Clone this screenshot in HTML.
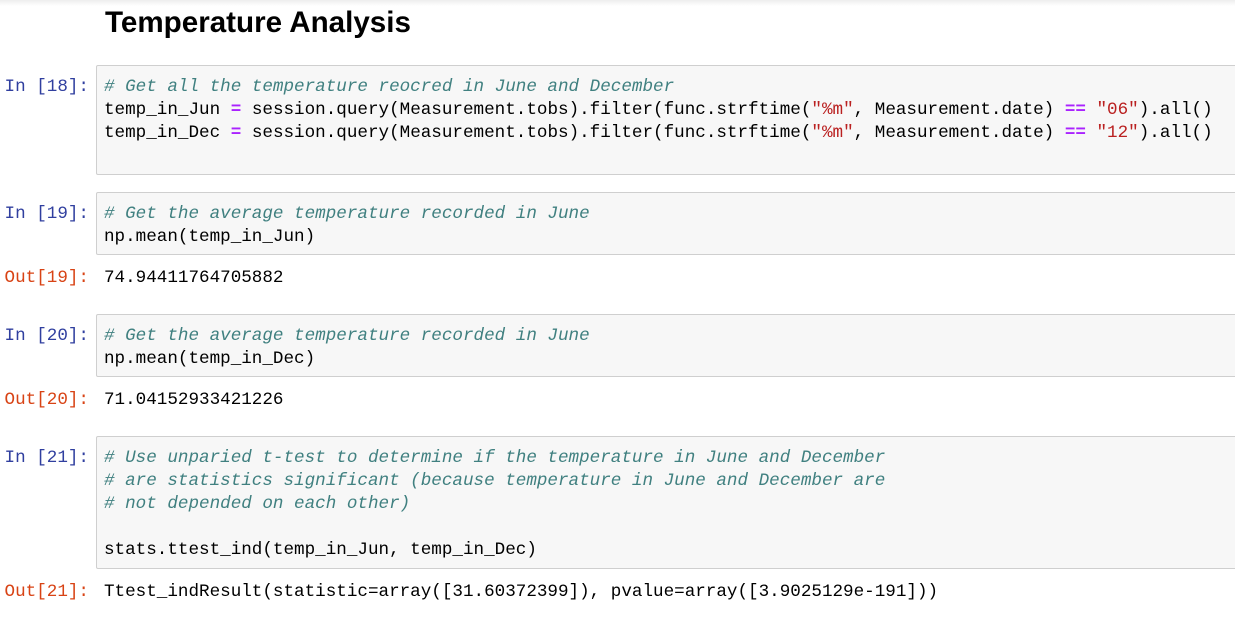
<html><head><style>
body{margin:0;width:1235px;height:619px;background:#fff;position:relative;overflow:hidden;font-family:"Liberation Mono",monospace;}
.t{position:absolute;left:105px;top:6px;font:bold 29.6px "Liberation Sans",sans-serif;color:#000;}
.box{position:absolute;left:96px;width:1145px;background:#f7f7f7;border:1px solid #cfcfcf;border-radius:2px;box-sizing:border-box;}
.l{position:absolute;left:104px;font-size:17.6px;line-height:23px;height:23px;white-space:pre;color:#000;margin-top:2px;}
.p{position:absolute;left:-4px;width:93px;text-align:right;font-size:17.6px;line-height:23px;white-space:pre;margin-top:2px;}
.in{color:#303F9F}.out{color:#D84315}
.c{color:#408080;font-style:italic}.o{color:#AA22FF;font-weight:bold}.s{color:#BA2121}
</style></head><body>
<div style="position:absolute;left:0;top:0;width:1235px;height:6px;background:linear-gradient(#eee,#fff)"></div>
<div class="t">Temperature Analysis</div>

<div class="box" style="top:65px;height:110px"></div>
<div class="p in" style="top:74px">In [18]:</div>
<div class="l c" style="top:74px"># Get all the temperature reocred in June and December</div>
<div class="l" style="top:97px">temp_in_Jun <span class="o">=</span> session.query(Measurement.tobs).filter(func.strftime(<span class="s">"%m"</span>, Measurement.date) <span class="o">==</span> <span class="s">"06"</span>).all()</div>
<div class="l" style="top:120px">temp_in_Dec <span class="o">=</span> session.query(Measurement.tobs).filter(func.strftime(<span class="s">"%m"</span>, Measurement.date) <span class="o">==</span> <span class="s">"12"</span>).all()</div>

<div class="box" style="top:192px;height:63px"></div>
<div class="p in" style="top:201px">In [19]:</div>
<div class="l c" style="top:201px"># Get the average temperature recorded in June</div>
<div class="l" style="top:224px">np.mean(temp_in_Jun)</div>
<div class="p out" style="top:265px">Out[19]:</div>
<div class="l" style="top:265px">74.94411764705882</div>

<div class="box" style="top:314px;height:63px"></div>
<div class="p in" style="top:323px">In [20]:</div>
<div class="l c" style="top:323px"># Get the average temperature recorded in June</div>
<div class="l" style="top:346px">np.mean(temp_in_Dec)</div>
<div class="p out" style="top:387px">Out[20]:</div>
<div class="l" style="top:387px">71.04152933421226</div>

<div class="box" style="top:436px;height:133px"></div>
<div class="p in" style="top:445px">In [21]:</div>
<div class="l c" style="top:445px"># Use unparied t-test to determine if the temperature in June and December</div>
<div class="l c" style="top:468px"># are statistics significant (because temperature in June and December are</div>
<div class="l c" style="top:491px"># not depended on each other)</div>
<div class="l" style="top:537px">stats.ttest_ind(temp_in_Jun, temp_in_Dec)</div>
<div class="p out" style="top:579px">Out[21]:</div>
<div class="l" style="top:579px">Ttest_indResult(statistic=array([31.60372399]), pvalue=array([3.9025129e-191]))</div>
</body></html>
